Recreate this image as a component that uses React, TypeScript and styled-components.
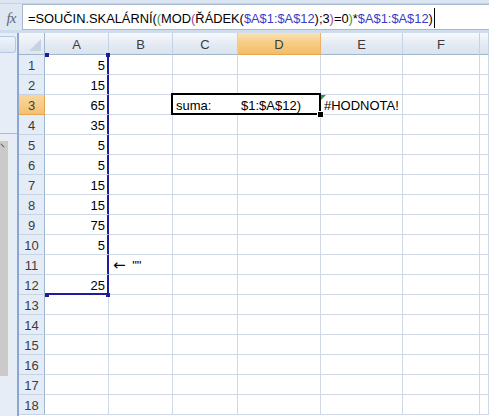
import React from 'react'
import styled, { createGlobalStyle, css } from 'styled-components'

const GlobalStyle = createGlobalStyle`
  html, body {
    margin: 0;
    padding: 0;
    background: #ffffff;
  }
  body {
    font-family: 'Liberation Sans', Arial, sans-serif;
  }
`

type Tone = 'plain' | 'green' | 'purple' | 'ref'

const formula: [string, Tone][] = [
  ['=SOUČIN.SKALÁRNÍ(', 'plain'],
  ['(', 'green'],
  ['MOD', 'plain'],
  ['(', 'purple'],
  ['ŘÁDEK(', 'plain'],
  ['$A$1:$A$12', 'ref'],
  [')', 'plain'],
  [';3', 'plain'],
  [')', 'purple'],
  ['=0', 'plain'],
  [')', 'green'],
  ['*', 'plain'],
  ['$A$1:$A$12', 'ref'],
  [')', 'plain'],
]

const toneColor: Record<Tone, string> = {
  plain: '#000000',
  green: '#3f9a3f',
  purple: '#a447a4',
  ref: '#3b3bc4',
}

const columns = [
  { name: 'A', width: 64 },
  { name: 'B', width: 64 },
  { name: 'C', width: 65 },
  { name: 'D', width: 83 },
  { name: 'E', width: 82 },
  { name: 'F', width: 77 },
  { name: '', width: 0 },
]

const valuesA: (number | '')[] = [5, 15, 65, 35, 5, 5, 15, 15, 75, 5, '', 25]
const ROWS = 18
const ACTIVE_ROW = 3
const ACTIVE_COL = 'D'

const App: React.FC = () => {
  const renderCell = (row: number, col: string) => {
    const key = `${col}${row}`
    if (col === 'A') {
      const v = row <= 12 ? valuesA[row - 1] : ''
      const inRange = row <= 12
      return (
        <Cell key={key} $align="right" $rangeRight={inRange} $rangeBottom={row === 12}>
          {v}
          {row === 1 && (
            <>
              <RangeDot style={{ left: 0, top: -2 }} />
              <RangeDot style={{ right: -2, top: -2 }} />
            </>
          )}
          {row === 12 && (
            <>
              <RangeDot style={{ left: 0, bottom: -3 }} />
              <RangeDot style={{ right: -2, bottom: -3 }} />
            </>
          )}
        </Cell>
      )
    }
    if (col === 'B' && row === 11) {
      return (
        <Cell key={key}>
          <Arrow>←</Arrow>
          {' ""'}
        </Cell>
      )
    }
    if (col === 'C' && row === 3) {
      return (
        <Cell key={key} $noRight>
          suma:
          <SelectionFrame />
        </Cell>
      )
    }
    if (col === 'D' && row === 3) {
      return (
        <Cell key={key}>
          $1:$A$12)
          <FillHandle />
        </Cell>
      )
    }
    if (col === 'E' && row === 3) {
      return (
        <Cell key={key}>
          <ErrorMark />
          #HODNOTA!
        </Cell>
      )
    }
    return <Cell key={key} />
  }

  return (
    <Page>
      <GlobalStyle />
      <TopStrip />
      <FormulaBar>
        <FxBox>
          <Fx>fx</Fx>
        </FxBox>
        <FormulaInput>
          {formula.map(([text, tone], i) => (
            <Part key={i} $tone={tone}>
              {text}
            </Part>
          ))}
          <Caret />
        </FormulaInput>
      </FormulaBar>
      <Gap />
      <Body>
        <SidePane>
          <PaneTab />
          <PaneDivider />
          <PaneBlock>
            <PaneMark />
          </PaneBlock>
        </SidePane>
        <Sheet>
          <Corner>
            <CornerTriangle />
          </Corner>
          {columns.map(c => (
            <ColHeader key={c.name || 'rest'} $active={c.name === ACTIVE_COL}>
              {c.name}
            </ColHeader>
          ))}
          {Array.from({ length: ROWS }, (_, i) => i + 1).map(row => (
            <React.Fragment key={row}>
              <RowHeader $active={row === ACTIVE_ROW}>{row}</RowHeader>
              {columns.map(c => renderCell(row, c.name || 'G'))}
            </React.Fragment>
          ))}
        </Sheet>
      </Body>
    </Page>
  )
}

const Page = styled.div`
  width: 489px;
  height: 416px;
  overflow: hidden;
  display: flex;
  flex-direction: column;
  background: #ffffff;
`

const TopStrip = styled.div`
  height: 4px;
  flex: none;
  background: #dce6f3;
  border-bottom: 1px solid #c3d2e6;
  box-sizing: border-box;
`

const FormulaBar = styled.div`
  height: 26px;
  flex: none;
  display: flex;
  background: #dfe7f2;
`

const FxBox = styled.div`
  width: 22px;
  flex: none;
  display: flex;
  align-items: center;
  justify-content: center;
`

const Fx = styled.span`
  font-family: 'Liberation Serif', 'Times New Roman', serif;
  font-style: italic;
  font-size: 15px;
  color: #5f6670;
  letter-spacing: -1px;
  margin-top: 2px;
`

const FormulaInput = styled.div`
  flex: 1;
  background: #ffffff;
  border: 1px solid #a7b9d2;
  border-right: none;
  box-sizing: border-box;
  display: flex;
  align-items: center;
  padding: 3px 0 0 5px;
  font-size: 12.85px;
  white-space: nowrap;
  overflow: hidden;
`

const Part = styled.span<{ $tone: Tone }>`
  color: ${p => toneColor[p.$tone]};
`

const Caret = styled.span`
  display: inline-block;
  width: 1px;
  height: 20px;
  margin-left: 1px;
  margin-top: -2px;
  background: #000000;
`

const Gap = styled.div`
  height: 3px;
  flex: none;
  background: #cfdcee;
`

const Body = styled.div`
  flex: 1;
  display: flex;
  min-height: 0;
`

const SidePane = styled.div`
  width: 19px;
  flex: none;
  box-sizing: border-box;
  background: #e6edf7;
  border-right: 2px solid #8ba8d3;
  display: flex;
  flex-direction: column;
  align-items: flex-start;
`

const PaneTab = styled.div`
  width: 16px;
  height: 17px;
  margin-top: 3px;
  box-sizing: border-box;
  background: linear-gradient(#eef3fa, #d9e4f2);
  border: 1px solid #b5c8e2;
  border-left: none;
  border-radius: 0 3px 3px 0;
`

const PaneDivider = styled.div`
  width: 17px;
  height: 1px;
  margin-top: 80px;
  background: #a9bcd6;
`

const PaneBlock = styled.div`
  position: relative;
  width: 9px;
  height: 237px;
  margin-top: 6px;
  box-sizing: border-box;
  background: #cacaca;
  border: 1px solid #ededed;
  border-left: none;
`

const PaneMark = styled.div`
  position: absolute;
  top: 2px;
  left: 2px;
  width: 1px;
  height: 5px;
  background: #555;
  transform: rotate(-45deg);
`

const Sheet = styled.div`
  flex: 1;
  display: grid;
  grid-template-columns: 26px 64px 64px 65px 83px 82px 77px 1fr;
  grid-template-rows: 22px repeat(${ROWS}, 20px);
  font-size: 13px;
  align-content: start;
`

const headerBase = css`
  box-sizing: border-box;
  display: flex;
  align-items: center;
  justify-content: center;
  color: #3c3c3c;
  font-size: 13px;
`

const Corner = styled.div`
  ${headerBase};
  position: relative;
  background: linear-gradient(#f4f7fb, #dfe6f0);
  border-right: 1px solid #9eb6ce;
  border-bottom: 1px solid #9eb6ce;
`

const CornerTriangle = styled.div`
  position: absolute;
  right: 3px;
  bottom: 3px;
  width: 0;
  height: 0;
  border-left: 12px solid transparent;
  border-bottom: 12px solid #c5d2e3;
`

const ColHeader = styled.div<{ $active?: boolean }>`
  ${headerBase};
  padding-top: 1px;
  background: ${p =>
    p.$active
      ? 'linear-gradient(#fae2b5, #f6cd86 45%, #f2bd68)'
      : 'linear-gradient(#f7f9fc, #e4eaf3 55%, #dbe3ee)'};
  border-right: 1px solid ${p => (p.$active ? '#e9b266' : '#c5d3e5')};
  border-bottom: 1px solid ${p => (p.$active ? '#e8a74e' : '#9eb6ce')};
`

const RowHeader = styled.div<{ $active?: boolean }>`
  ${headerBase};
  background: ${p => (p.$active ? 'linear-gradient(#f9d89d, #f3c073)' : '#e4ecf7')};
  border-right: 1px solid ${p => (p.$active ? '#e8a74e' : '#9eb6ce')};
  border-bottom: 1px solid ${p => (p.$active ? '#e8a74e' : '#c5d3e5')};
  padding-top: 1px;
`

const RANGE = '#1e1e9c'

const Cell = styled.div<{
  $align?: 'left' | 'right'
  $rangeRight?: boolean
  $rangeBottom?: boolean
  $noRight?: boolean
}>`
  position: relative;
  box-sizing: border-box;
  display: flex;
  align-items: center;
  justify-content: ${p => (p.$align === 'right' ? 'flex-end' : 'flex-start')};
  padding: 2px 3px 0;
  color: #000000;
  white-space: pre;
  border-right: 1px solid ${p => (p.$rangeRight ? RANGE : p.$noRight ? '#ffffff' : '#d0d7e5')};
  border-bottom: 1px solid ${p => (p.$rangeBottom ? RANGE : '#d0d7e5')};
  box-shadow: ${p =>
    [p.$rangeRight && `inset -1px 0 0 ${RANGE}`, p.$rangeBottom && `inset 0 -1px 0 ${RANGE}`]
      .filter(Boolean)
      .join(', ') || 'none'};
`

const Arrow = styled.span`
  font-family: 'DejaVu Sans', sans-serif;
  font-size: 15px;
  line-height: 1;
  margin: 0 3px 0 1px;
`

const RangeDot = styled.span`
  position: absolute;
  width: 4px;
  height: 4px;
  background: ${RANGE};
  z-index: 2;
`

const SelectionFrame = styled.div`
  position: absolute;
  left: -2px;
  top: -2px;
  width: 150px;
  height: 22px;
  box-sizing: border-box;
  border: 2px solid #000000;
  pointer-events: none;
  z-index: 2;
`

const FillHandle = styled.span`
  position: absolute;
  right: -4px;
  bottom: -4px;
  width: 5px;
  height: 5px;
  background: #000000;
  border: 1px solid #ffffff;
  z-index: 3;
`

const ErrorMark = styled.span`
  position: absolute;
  left: 0;
  top: 0;
  width: 0;
  height: 0;
  border-top: 5px solid #2f9a47;
  border-right: 5px solid transparent;
`

export default App
